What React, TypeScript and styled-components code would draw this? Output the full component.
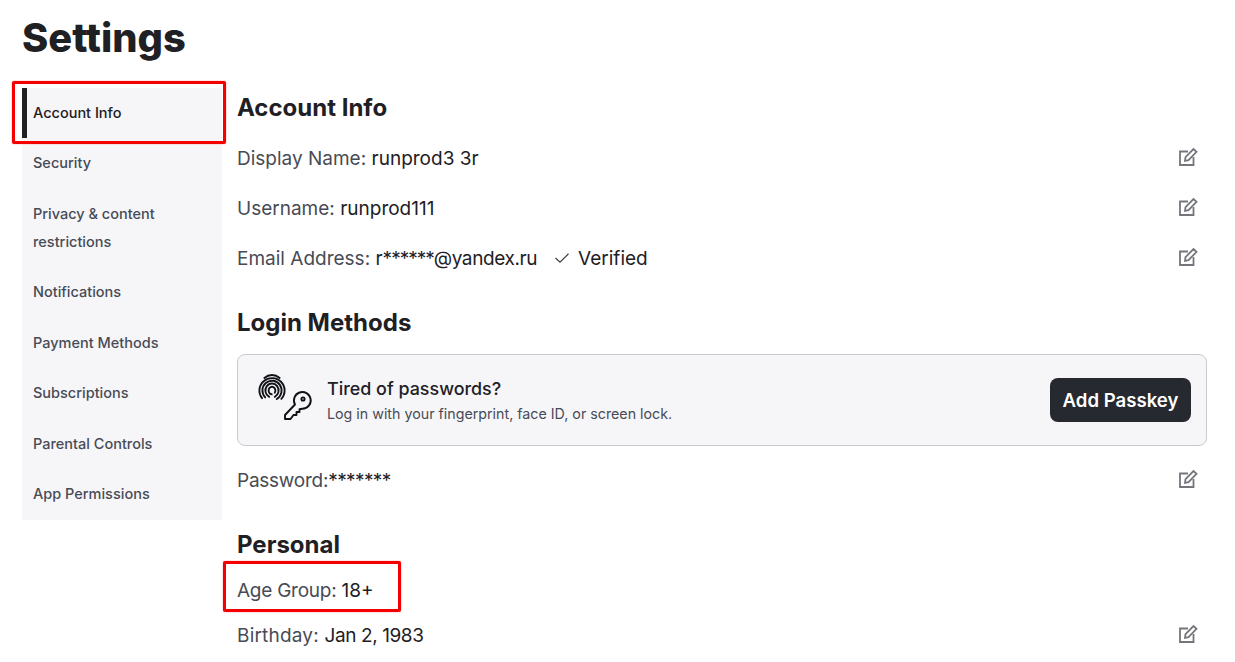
import React from "react";
import styled, { createGlobalStyle } from "styled-components";

const Global = createGlobalStyle`
  html, body { margin: 0; padding: 0; background: #fff; overflow: hidden; }
  body { font-family: Inter, "Noto Sans", "Liberation Sans", sans-serif; color: #1e2024; }
  * { box-sizing: border-box; }
`;

const Page = styled.div`
  position: relative;
  width: 1235px;
  height: 662px;
  overflow: hidden;
  padding: 16px 28px 0 22px;
`;

const Title = styled.h1`
  margin: 0;
  height: 72px;
  font-size: 39.8px;
  line-height: 44px;
  font-weight: 800;
  color: #1e2024;
`;

const Columns = styled.div`
  display: flex;
  align-items: flex-start;
  gap: 15px;
`;

const Sidebar = styled.nav`
  width: 200px;
  flex: none;
  background: #f6f6f9;
  display: flex;
  flex-direction: column;
`;

const NavItem = styled.div<{ $active?: boolean }>`
  padding: 11px 11px 11px ${p => (p.$active ? "6px" : "11px")};
  font-size: 14.5px;
  line-height: 28px;
  font-weight: 500;
  color: ${p => (p.$active ? "#1e2024" : "#484b55")};
  border-left: ${p => (p.$active ? "5px solid #1e2024" : "none")};
  min-height: ${p => (p.$active ? "50.4px" : "50.6px")};
`;

const Main = styled.main`
  flex: 1;
  min-width: 0;
`;

const Heading = styled.h2<{ $top?: number }>`
  margin: ${p => p.$top ?? 0}px 0 0;
  font-size: 24px;
  line-height: 38px;
  font-weight: 650;
  color: #1e2024;
`;

const Row = styled.div<{ $top?: number }>`
  display: flex;
  align-items: center;
  justify-content: space-between;
  height: 50px;
  padding-right: 9px;
  margin-top: ${p => p.$top ?? 0}px;
  font-size: 19px;
  color: #1e2024;
`;

const Field = styled.div`
  display: flex;
  align-items: center;
  white-space: pre;
`;

const Label = styled.span<{ $spacing?: number }>`
  color: #484b55;
  letter-spacing: ${p => p.$spacing ?? 0}px;
`;

const Stars = styled.span<{ $pull?: number; $spacing?: number }>`
  letter-spacing: ${p => p.$spacing ?? -1}px;
  margin-left: ${p => p.$pull ?? 0}px;
`;

const Value = styled.span`
  letter-spacing: -0.4px;
`;

const VerifiedMark = styled.span`
  display: inline-flex;
  align-items: center;
  margin-left: 17px;
  gap: 8px;
`;

const PasskeyCard = styled.div`
  display: flex;
  align-items: center;
  height: 92px;
  margin-top: 12px;
  padding: 0 15px 0 20px;
  background: #f6f6f9;
  border: 1px solid #c9cacd;
  border-radius: 8px;
`;

const PasskeyText = styled.div`
  flex: 1;
  margin-left: 13px;
`;

const PasskeyTitle = styled.div`
  font-size: 17.9px;
  line-height: 24px;
  font-weight: 450;
  color: #1e2024;
`;

const PasskeySub = styled.div`
  margin-top: 3px;
  font-size: 14.25px;
  line-height: 20px;
  color: #484b55;
`;

const PasskeyButton = styled.button`
  height: 44px;
  width: 141px;
  border: none;
  border-radius: 8px;
  background: #272930;
  color: #fff;
  font: 600 18.6px Inter, "Noto Sans", sans-serif;
`;

const Note = styled.div<{ $x: number; $y: number; $w: number; $h: number }>`
  position: absolute;
  left: ${p => p.$x}px;
  top: ${p => p.$y}px;
  width: ${p => p.$w}px;
  height: ${p => p.$h}px;
  border: 3px solid #f50000;
  border-radius: 2px;
  box-shadow: 0 0 1px #f50000;
`;

const EditSvg = styled.svg`
  flex: none;
  margin-bottom: 2px;
`;

const PasskeySvg = styled.svg`
  flex: none;
  margin-top: -4px;
`;

const EditIcon = () => (
  <EditSvg width="20" height="20" viewBox="0 0 20 20" fill="none" stroke="#74767c" strokeWidth="1.8">
    <path d="M10 4.500H2V18H15.500V10" />
    <path d="M7 13.800 7.500 10.200 15.500 2 18.500 4.800 10.500 13.200Z" />
  </EditSvg>
);

const CheckIcon = () => (
  <svg width="16" height="16" viewBox="0 0 16 16" fill="none" stroke="#3c3e45" strokeWidth="1.2">
    <path d="M1.500 8 6 12.200 14.500 3.800" />
  </svg>
);

const arc = (rx: number, ry: number, from: number, to: number) => {
  const cx = 14;
  const cy = 16.500;
  const pt = (a: number) => {
    const t = (a * Math.PI) / 180;
    return `${(cx + rx * Math.sin(t)).toFixed(2)} ${(cy - ry * Math.cos(t)).toFixed(2)}`;
  };
  return `M${pt(from)}A${rx} ${ry} 0 ${to - from > 180 ? 1 : 0} 1 ${pt(to)}`;
};

const PasskeyIcon = () => (
  <PasskeySvg width="56" height="48" viewBox="0 0 56 48" fill="none" stroke="#111216" strokeWidth="1.9" strokeLinecap="round" strokeLinejoin="round">
    <path d={arc(13, 15.5, -36, 36)} />
    <path d={arc(12.6, 12.400, -128, 132)} />
    <path d={arc(9.600, 9.800, -135, 150)} />
    <path d={arc(6.600, 7, -155, 155)} />
    <path d={arc(3.400, 3.800, -175, 125)} />
    <path d="M27 41 37 30.500A8.400 8.400 0 1 1 44.500 34.800L41.500 35.200V38H38.500V41H35.500L32.500 45H27Z" />
    <circle cx="45" cy="25" r="1.600" />
  </PasskeySvg>
);

const navItems = [
  "Account Info",
  "Security",
  "Privacy & content restrictions",
  "Notifications",
  "Payment Methods",
  "Subscriptions",
  "Parental Controls",
  "App Permissions",
];

export default function App() {
  return (
    <Page>
      <Global />
      <Title>Settings</Title>
      <Columns>
        <Sidebar>
          {navItems.map((n, i) => (
            <NavItem key={n} $active={i === 0}>{n}</NavItem>
          ))}
        </Sidebar>
        <Main>
          <Heading $top={1}>Account Info</Heading>
          <Row $top={6}>
            <Field><Label>Display Name: </Label>runprod3 3r</Field>
            <EditIcon />
          </Row>
          <Row>
            <Field><Label>Username: </Label>runprod111</Field>
            <EditIcon />
          </Row>
          <Row>
            <Field>
              <Label>Email Address: </Label>r<Stars>******</Stars><Value>@yandex.ru</Value>
              <VerifiedMark><CheckIcon />Verified</VerifiedMark>
            </Field>
            <EditIcon />
          </Row>
          <Heading $top={21}>Login Methods</Heading>
          <PasskeyCard>
            <PasskeyIcon />
            <PasskeyText>
              <PasskeyTitle>Tired of passwords?</PasskeyTitle>
              <PasskeySub>Log in with your fingerprint, face ID, or screen lock.</PasskeySub>
            </PasskeyText>
            <PasskeyButton>Add Passkey</PasskeyButton>
          </PasskeyCard>
          <Row $top={9}>
            <Field><Label $spacing={-0.25}>Password: </Label><Stars $pull={-5} $spacing={-0.6}>*******</Stars></Field>
            <EditIcon />
          </Row>
          <Heading $top={21}>Personal</Heading>
          <Row $top={1}>
            <Field><Label $spacing={-0.25}>Age Group: </Label>18+</Field>
          </Row>
          <Row $top={-5}>
            <Field><Label $spacing={0.2}>Birthday: </Label><Value>Jan 2, 1983</Value></Field>
            <EditIcon />
          </Row>
        </Main>
      </Columns>
      <Note $x={12} $y={81} $w={214} $h={63} />
      <Note $x={223} $y={561} $w={178} $h={51} />
    </Page>
  );
}
